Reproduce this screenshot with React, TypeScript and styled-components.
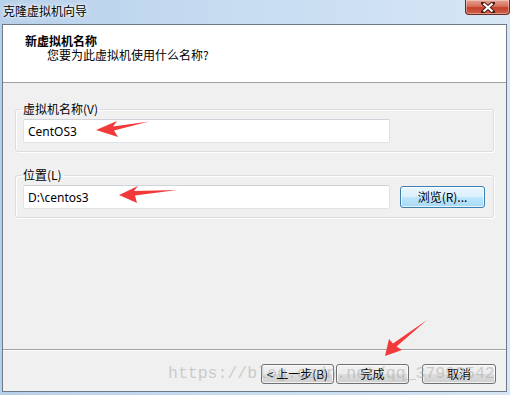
import React from 'react';
import styled, { createGlobalStyle } from 'styled-components';

const GlobalStyle = createGlobalStyle`
    html, body {
        margin: 0;
        padding: 0;
        width: 510px;
        height: 395px;
        overflow: hidden;
    }
    body {
        font-family: "Noto Sans CJK SC", "Noto Sans", sans-serif;
        font-size: 12px;
        color: #000;
    }
`;

const Window = styled.div`
    position: relative;
    width: 510px;
    height: 395px;
    box-sizing: border-box;
    display: flex;
    flex-direction: column;
    background: linear-gradient(90deg, #b7d0ea 0%, #c6dcf1 45%, #d6e6f5 100%);
    padding: 0 3px 3px 2px;
`;

const TitleBar = styled.div`
    height: 24px;
    display: flex;
    align-items: flex-start;
    justify-content: space-between;
    flex-shrink: 0;
`;

const Title = styled.div`
    padding: 3px 0 0 1px;
    line-height: 16px;
    font-size: 12px;
    color: #000;
    text-shadow: 0 0 6px #ffffff, 0 0 3px #ffffff;
`;

const CloseButton = styled.div`
    width: 45px;
    height: 15px;
    box-sizing: border-box;
    margin-right: -3px;
    border: 1px solid #6b2a22;
    border-top: none;
    border-radius: 0 0 4px 4px;
    background: linear-gradient(180deg, #e6a191 0%, #d56f5c 45%, #c2412b 55%, #d0604a 100%);
    box-shadow: inset 0 0 0 1px rgba(255, 255, 255, 0.35);
    display: flex;
    align-items: center;
    justify-content: center;
`;

const Client = styled.div`
    flex: 1;
    display: flex;
    flex-direction: column;
    border: 1px solid #6e7a88;
    background: #f0f0f0;
`;

const Header = styled.div`
    height: 57px;
    flex-shrink: 0;
    background: #ffffff;
    border-bottom: 1px solid #a0a0a0;
    padding: 9px 0 0 22px;
    box-sizing: border-box;
    height: 58px;
`;

const HeaderTitle = styled.div`
    font-weight: bold;
    line-height: 14px;
    font-size: 12px;
`;

const HeaderSub = styled.div`
    padding-left: 22px;
    line-height: 14px;
    font-size: 12px;
`;

const Body = styled.div`
    flex: 1;
    padding: 18px 12px 0 12px;
    border-bottom: 1px solid #a0a0a0;
`;

const Group = styled.fieldset<{ $spaced?: boolean }>`
    margin: ${(p) => (p.$spaced ? '15px' : '0')} 0 0 0;
    padding: 2px 6px 8px 6px;
    border: 1px solid #d9dde2;
    border-radius: 3px;
    box-shadow: inset 1px 1px 0 #ffffff, 1px 1px 0 #ffffff;
`;

const Legend = styled.legend`
    padding: 0 2px 0 1px;
    line-height: 16px;
    font-size: 12px;
`;

const FieldRow = styled.div`
    display: flex;
    align-items: center;
    gap: 10px;
`;

const TextField = styled.div`
    width: 367px;
    height: 24px;
    box-sizing: border-box;
    margin-left: 1px;
    border: 1px solid #e0e3e7;
    border-top-color: #cfd3d9;
    border-radius: 2px;
    background: #ffffff;
    padding-left: 4px;
    display: flex;
    align-items: center;
    font-family: "Noto Sans", "Noto Sans CJK SC", sans-serif;
    font-size: 12px;
`;

const Button = styled.div<{ $width: number; $focused?: boolean }>`
    width: ${(p) => p.$width}px;
    height: ${(p) => (p.$focused ? 22 : 20)}px;
    box-sizing: border-box;
    border: 1px solid ${(p) => (p.$focused ? '#3c7fb1' : '#707070')};
    border-radius: 3px;
    background: ${(p) =>
        p.$focused
            ? 'linear-gradient(180deg, #eaf6fd 0%, #d9f0fc 50%, #bee6fd 51%, #a7d9f5 100%)'
            : 'linear-gradient(180deg, #f2f2f2 0%, #ebebeb 50%, #dddddd 51%, #cfcfcf 100%)'};
    box-shadow: inset 0 0 0 1px rgba(255, 255, 255, 0.7);
    display: flex;
    align-items: center;
    justify-content: center;
    font-size: 12px;
    line-height: 14px;
`;

const Footer = styled.div`
    height: 41px;
    flex-shrink: 0;
    box-sizing: border-box;
    padding: 13px 10px 0 0;
    display: flex;
    justify-content: flex-end;
    align-items: flex-start;
    border-top: 1px solid #ffffff;
`;

const Spacer = styled.div<{ $w: number }>`
    width: ${(p) => p.$w}px;
`;

const Watermark = styled.div`
    position: absolute;
    left: 168px;
    top: 364px;
    font-family: "Liberation Mono", monospace;
    font-size: 16.5px;
    line-height: 20px;
    color: rgba(170, 170, 170, 0.55);
    white-space: nowrap;
    pointer-events: none;
`;

const Overlay = styled.svg`
    position: absolute;
    left: 0;
    top: 0;
    pointer-events: none;
`;

const App = () => {
    return (
        <>
            <GlobalStyle />
            <Window>
                <TitleBar>
                    <Title>克隆虚拟机向导</Title>
                    <CloseButton>
                        <svg width="14" height="11" viewBox="0 0 14 11">
                            <path d="M2 1 L12 10 M12 1 L2 10" stroke="#4a1a14" strokeWidth="4" strokeLinecap="square" />
                            <path d="M2.5 1.5 L11.5 9.5 M11.5 1.5 L2.5 9.5" stroke="#ffffff" strokeWidth="2.2" />
                        </svg>
                    </CloseButton>
                </TitleBar>
                <Client>
                    <Header>
                        <HeaderTitle>新虚拟机名称</HeaderTitle>
                        <HeaderSub>您要为此虚拟机使用什么名称?</HeaderSub>
                    </Header>
                    <Body>
                        <Group>
                            <Legend>虚拟机名称(V)</Legend>
                            <FieldRow>
                                <TextField>CentOS3</TextField>
                            </FieldRow>
                        </Group>
                        <Group $spaced>
                            <Legend>位置(L)</Legend>
                            <FieldRow>
                                <TextField>D:\centos3</TextField>
                                <Button $width={85} $focused>浏览(R)...</Button>
                            </FieldRow>
                        </Group>
                    </Body>
                    <Footer>
                        <Button $width={73}>&lt; 上一步(B)</Button>
                        <Spacer $w={2} />
                        <Button $width={73}>完成</Button>
                        <Spacer $w={13} />
                        <Button $width={74}>取消</Button>
                    </Footer>
                </Client>
                <Watermark>https://blog.csdn.net/qq_37992542</Watermark>
                <Overlay width="510" height="395" viewBox="0 0 510 395">
                    <polygon points="96,130 117,121 113,126.5 149,121.5 114,130.5 118,137" fill="#f23a3a" />
                    <polygon points="119,195 138,186 134,191 177,190 135,195.5 137,203" fill="#f23a3a" />
                    <polygon points="385,356 389,339 393,343.5 427,320 396.5,346.5 402,350" fill="#f23a3a" />
                </Overlay>
            </Window>
        </>
    );
};

export default App;
